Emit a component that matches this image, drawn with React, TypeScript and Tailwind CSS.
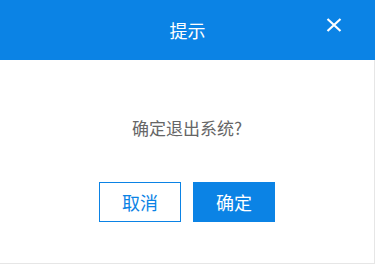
import React from 'react';

const App: React.FC = () => {
  return (
    <div
      className="w-[375px] h-[264px] bg-[#e6e6e6] overflow-hidden"
      style={{ fontFamily: '"Noto Sans CJK SC", "Liberation Sans", sans-serif' }}
    >
      {/* Header */}
      <div className="relative h-[60px] bg-[#0b83e5] flex items-center justify-center">
        <span className="text-white text-[18px]">提示</span>
        <button className="absolute left-[326px] top-[18px] w-[16px] h-[14px]">
          <svg width="16" height="14" viewBox="0 0 16 14" fill="none" stroke="white" strokeWidth="2.2">
            <path d="M1.5 1 L14.5 13 M14.5 1 L1.5 13" />
          </svg>
        </button>
      </div>

      {/* Body */}
      <div className="w-[374px] h-[203px] bg-white flex flex-col items-center">
        <p className="mt-[59px] text-[17px] text-[#666666] leading-none">确定退出系统?</p>
        <div className="mt-[46px] flex gap-[12px]">
          <button className="w-[82px] h-[40px] border border-[#0b83e5] text-[#0b83e5] text-[18px] bg-white">
            取消
          </button>
          <button className="w-[82px] h-[40px] bg-[#0b83e5] text-white text-[18px]">
            确定
          </button>
        </div>
      </div>
    </div>
  );
};

export default App;
